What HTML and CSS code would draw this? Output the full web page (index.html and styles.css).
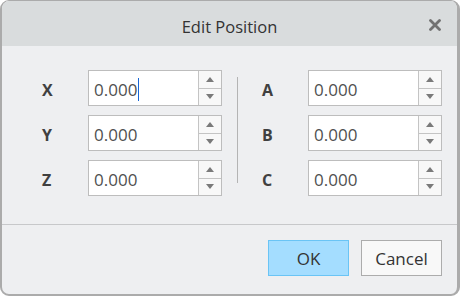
FILE: index.html
```html
<!doctype html>
<html>
<head>
<meta charset="utf-8">
<title>Edit Position</title>
<link rel="stylesheet" href="styles.css">
</head>
<body>
<div class="dlg">
	<div class="head">
		<span class="title">Edit Position</span>
		<span class="close">
			<svg width="12" height="12" viewBox="0 0 12 12"><path d="M1.5 1.5L10.5 10.5M10.5 1.5L1.5 10.5" stroke="#727272" stroke-width="2.8" stroke-linecap="round"/></svg>
		</span>
	</div>

	<div class="main">
		<div class="group">
			<label>X</label>
			<div class="spin"><span class="val">0.000<i class="caret"></i></span><span class="arrows"><b class="up"></b><b class="down"></b></span></div>
			<label>Y</label>
			<div class="spin"><span class="val">0.000</span><span class="arrows"><b class="up"></b><b class="down"></b></span></div>
			<label>Z</label>
			<div class="spin"><span class="val">0.000</span><span class="arrows"><b class="up"></b><b class="down"></b></span></div>
		</div>
		<div class="vline"></div>
		<div class="group">
			<label>A</label>
			<div class="spin"><span class="val">0.000</span><span class="arrows"><b class="up"></b><b class="down"></b></span></div>
			<label>B</label>
			<div class="spin"><span class="val">0.000</span><span class="arrows"><b class="up"></b><b class="down"></b></span></div>
			<label>C</label>
			<div class="spin"><span class="val">0.000</span><span class="arrows"><b class="up"></b><b class="down"></b></span></div>
		</div>
	</div>

	<div class="foot">
		<button class="btn ok">OK</button>
		<button class="btn">Cancel</button>
	</div>
</div>
</body>
</html>
```

FILE: styles.css
```css
* { margin: 0; padding: 0; box-sizing: border-box; }
html, body { width: 460px; height: 296px; background: #fff; }
body { font-family: "Open Sans", "Noto Sans", sans-serif; color: #333; }

.dlg { width: 460px; height: 296px; border: solid #ababab; border-width: 1px 3px 2px 2px; border-radius: 9px; background: #eeeff1; overflow: hidden; display: flex; flex-direction: column; }

.head { height: 45px; background: #d9dcdd; display: flex; align-items: center; justify-content: center; position: relative; }
.head .title { font-size: 16.5px; color: #333; padding-top: 5px; }
.head .close { position: absolute; right: 16px; top: 18px; width: 12px; height: 12px; line-height: 0; }

.main { display: flex; padding: 24px 0 0 40px; height: 179px; border-bottom: 1px solid #c7c8ca; }
.group { display: grid; grid-template-columns: 46px 134px; grid-auto-rows: 36px; row-gap: 9px; }
.group label { font-size: 16px; font-weight: bold; color: #404040; display: flex; align-items: center; padding-top: 3px; }
.vline { width: 1px; background: #b4b4b4; margin: 7px 24px 13px 15px; height: 106px; }

.spin { display: flex; background: #fff; border: 1px solid #bdbdbd; }
.spin .val { flex: 1; font-size: 17px; color: #505050; padding: 3px 0 0 5px; display: flex; align-items: center; }
.caret { display: inline-block; width: 1px; height: 23px; background: #1766d6; margin-left: 1px; }
.spin .arrows { width: 23px; border-left: 1px solid #c4c4c4; display: flex; flex-direction: column; background: #f8f8f8; }
.arrows b { flex: 1; display: flex; align-items: center; justify-content: center; }
.arrows b + b { border-top: 1px solid #c4c4c4; }
.arrows .up::before { content: ""; border: 4px solid transparent; border-top: 0; border-bottom: 5px solid #7a7a7a; }
.arrows .down::before { content: ""; border: 4px solid transparent; border-bottom: 0; border-top: 5px solid #7a7a7a; }

.foot { flex: 1; display: flex; justify-content: flex-end; align-items: flex-start; padding: 15px 15px 0 0; gap: 12px; }
.btn { width: 81px; height: 36px; font-family: inherit; font-size: 17px; color: #333; background: #f8f8f8; border: 1px solid #acacac; }
.btn.ok { background: #a4ddff; border-color: #6ac4f5; }
```
